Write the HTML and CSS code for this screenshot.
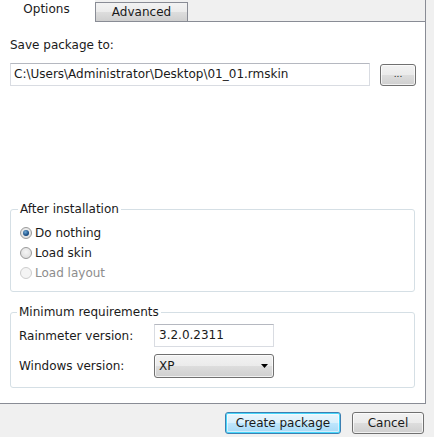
FILE: index.html
```html
<!DOCTYPE html>
<html>
<head>
<meta charset="utf-8">
<link rel="stylesheet" href="styles.css">
</head>
<body>
<div class="window">
  <div class="tabs">
    <div class="tab tab-active">Options</div>
    <div class="tab tab-idle">Advanced</div>
    <div class="tab-fill"></div>
  </div>
  <div class="panel">
    <div class="label save-label">Save package to:</div>
    <div class="path-row">
      <div class="textbox path-box">C:\Users\Administrator\Desktop\01_01.rmskin</div>
      <div class="btn browse-btn">...</div>
    </div>
    <fieldset class="group group-after">
      <legend>After installation</legend>
      <div class="radio-row"><span class="radio radio-checked"></span><span>Do nothing</span></div>
      <div class="radio-row"><span class="radio"></span><span>Load skin</span></div>
      <div class="radio-row disabled"><span class="radio radio-disabled"></span><span>Load layout</span></div>
    </fieldset>
    <fieldset class="group group-req">
      <legend>Minimum requirements</legend>
      <div class="field-row row-rm">
        <span class="field-label">Rainmeter version:</span>
        <div class="textbox small-box">3.2.0.2311</div>
      </div>
      <div class="field-row row-win">
        <span class="field-label">Windows version:</span>
        <div class="combo">
          <span>XP</span>
          <svg class="combo-arrow" width="7" height="4" viewBox="0 0 7 4"><path d="M0 0H7L3.5 4Z" fill="#000"/></svg>
        </div>
      </div>
    </fieldset>
  </div>
  <div class="footer">
    <div class="btn btn-default create-btn">Create package</div>
    <div class="btn cancel-btn">Cancel</div>
  </div>
</div>
</body>
</html>
```

FILE: styles.css
```css
html, body {
  margin: 0;
  padding: 0;
}
body {
  font-family: "DejaVu Sans", "Noto Sans", sans-serif;
  font-size: 12px;
  color: #1a1a1a;
}
.window {
  width: 434px;
  height: 437px;
  background: #f0f0f0;
  display: flex;
  flex-direction: column;
  overflow: hidden;
}
.tabs {
  height: 22px;
  display: flex;
  align-items: flex-end;
  flex: none;
}
.tab {
  box-sizing: border-box;
  display: flex;
  align-items: center;
  justify-content: center;
  line-height: 16px;
}
.tab-active {
  width: 95px;
  height: 22px;
  background: #fff;
  padding-bottom: 5px;
  padding-right: 2px;
}
.tab-idle {
  width: 93px;
  height: 20px;
  border: 1px solid #898c95;
  background: linear-gradient(#f3f3f3, #ebebeb 50%, #dddddd 51%, #cfcfcf);
  padding-bottom: 1px;
}
.tab-fill {
  width: 238px;
  height: 22px;
  box-sizing: border-box;
  border-bottom: 1px solid #898c95;
  border-right: 1px solid #898c95;
}
.panel {
  flex: none;
  box-sizing: border-box;
  width: 426px;
  height: 382px;
  background: #fff;
  border-right: 1px solid #898c95;
  border-bottom: 1px solid #898c95;
  display: flex;
  flex-direction: column;
}
.label {
  line-height: 16px;
}
.save-label {
  margin: 15px 0 0 10px;
}
.path-row {
  display: flex;
  align-items: center;
  gap: 10px;
  margin: 10px 0 0 10px;
}
.textbox {
  box-sizing: border-box;
  height: 23px;
  border: 1px solid #d9dce2;
  border-top-color: #b5b8c0;
  background: #fff;
  padding: 0 3px;
  line-height: 21px;
  white-space: nowrap;
}
.path-box {
  width: 360px;
}
.btn {
  box-sizing: border-box;
  height: 22px;
  border: 1px solid #707070;
  border-radius: 3px;
  background: linear-gradient(#f2f2f2, #ebebeb 50%, #dddddd 51%, #cfcfcf);
  display: flex;
  align-items: center;
  justify-content: center;
  line-height: 16px;
  box-shadow: inset 0 0 0 1px rgba(255,255,255,0.7);
}
.browse-btn {
  width: 36px;
  font-size: 9px;
  padding-bottom: 2px;
}
.group {
  margin: 0 10px;
  padding: 0 8px;
  border: 1px solid #d5dfe5;
  border-radius: 3px;
  min-width: 0;
}
.group legend {
  padding: 0 2px;
  margin-left: -2px;
  line-height: 16px;
}
.group-after {
  margin-top: auto;
  padding-top: 6px;
  padding-bottom: 8px;
  padding-left: 9px;
}
.radio-row {
  height: 20px;
  display: flex;
  align-items: center;
  gap: 3px;
}
.radio {
  box-sizing: border-box;
  width: 12px;
  height: 12px;
  border-radius: 50%;
  border: 1px solid #9a9a9a;
  background: radial-gradient(circle at 50% 40%, #f6f6f6, #d8d8d8);
  display: flex;
  align-items: center;
  justify-content: center;
}
.radio-checked::after {
  content: "";
  width: 6px;
  height: 6px;
  border-radius: 50%;
  background: radial-gradient(circle at 40% 35%, #6fa9d6, #1b4f86 60%, #0f3560);
}
.radio-disabled {
  border-color: #cdcdcd;
  background: #f4f4f4;
}
.disabled {
  color: #8d8d8d;
}
.group-req {
  margin-top: 12px;
  margin-bottom: 15px;
  padding-top: 4px;
  padding-bottom: 9px;
}
.field-row {
  display: flex;
  align-items: center;
}
.row-win {
  margin-top: 7px;
}
.field-label {
  width: 135px;
  line-height: 16px;
}
.small-box {
  width: 120px;
  padding-left: 4px;
}
.combo {
  box-sizing: border-box;
  width: 120px;
  height: 24px;
  border: 1px solid #707070;
  border-radius: 3px;
  background: linear-gradient(#f2f2f2, #ebebeb 50%, #dddddd 51%, #cfcfcf);
  display: flex;
  align-items: center;
  justify-content: space-between;
  padding: 0 5px 0 4px;
  box-shadow: inset 0 0 0 1px rgba(255,255,255,0.7);
}
.combo-arrow {
  display: block;
}
.footer {
  flex: 1;
  display: flex;
  justify-content: flex-end;
  align-items: flex-start;
  gap: 11px;
  padding: 8px 10px 0 0;
}
.create-btn {
  width: 116px;
}
.cancel-btn {
  width: 72px;
}
.btn-default {
  border-color: #3c7fb1;
  box-shadow: inset 0 0 0 1px #48d7fb, inset 0 0 0 2px rgba(255,255,255,0.5);
  background: linear-gradient(#eaf6fd, #d9f0fc 50%, #bee6fd 51%, #a7d9f5);
}
```
